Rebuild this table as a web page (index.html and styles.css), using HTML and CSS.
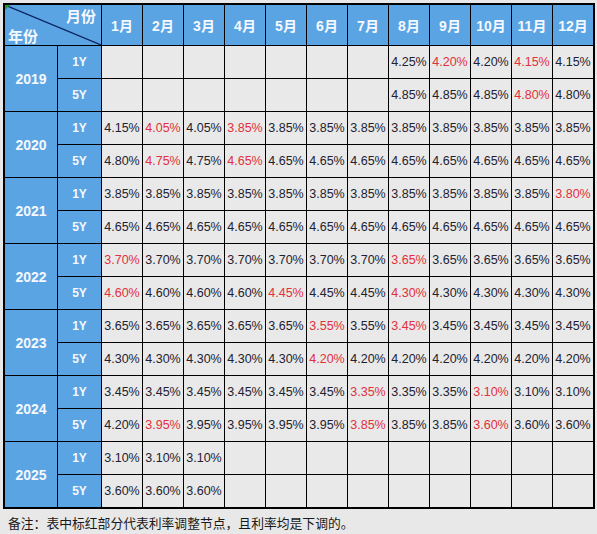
FILE: index.html
```html
<!DOCTYPE html>
<html lang="zh">
<head>
<meta charset="utf-8">
<title>LPR</title>
<link rel="stylesheet" href="styles.css">
</head>
<body>
<div class="page">
<div class="sheet">
  <div class="corner">
    <svg class="diag" viewBox="0 0 96 40" preserveAspectRatio="none"><line x1="0" y1="0" x2="96" y2="40" stroke="#0b2360" stroke-width="1.2"/></svg>
    <span class="flag"></span>
    <span class="c-m">月份</span>
    <span class="c-y">年份</span>
  </div>
  <div class="mh">1月</div><div class="mh">2月</div><div class="mh">3月</div><div class="mh">4月</div><div class="mh">5月</div><div class="mh">6月</div><div class="mh">7月</div><div class="mh">8月</div><div class="mh">9月</div><div class="mh">10月</div><div class="mh">11月</div><div class="mh">12月</div>

  <div class="yr">2019</div>
  <div class="tm">1Y</div>
  <div class="c"></div><div class="c"></div><div class="c"></div><div class="c"></div><div class="c"></div><div class="c"></div><div class="c"></div><div class="c">4.25%</div><div class="c dn">4.20%</div><div class="c">4.20%</div><div class="c dn">4.15%</div><div class="c">4.15%</div>
  <div class="tm">5Y</div>
  <div class="c"></div><div class="c"></div><div class="c"></div><div class="c"></div><div class="c"></div><div class="c"></div><div class="c"></div><div class="c">4.85%</div><div class="c">4.85%</div><div class="c">4.85%</div><div class="c dn">4.80%</div><div class="c">4.80%</div>

  <div class="yr">2020</div>
  <div class="tm">1Y</div>
  <div class="c">4.15%</div><div class="c dn">4.05%</div><div class="c">4.05%</div><div class="c dn">3.85%</div><div class="c">3.85%</div><div class="c">3.85%</div><div class="c">3.85%</div><div class="c">3.85%</div><div class="c">3.85%</div><div class="c">3.85%</div><div class="c">3.85%</div><div class="c">3.85%</div>
  <div class="tm">5Y</div>
  <div class="c">4.80%</div><div class="c dn">4.75%</div><div class="c">4.75%</div><div class="c dn">4.65%</div><div class="c">4.65%</div><div class="c">4.65%</div><div class="c">4.65%</div><div class="c">4.65%</div><div class="c">4.65%</div><div class="c">4.65%</div><div class="c">4.65%</div><div class="c">4.65%</div>

  <div class="yr">2021</div>
  <div class="tm">1Y</div>
  <div class="c">3.85%</div><div class="c">3.85%</div><div class="c">3.85%</div><div class="c">3.85%</div><div class="c">3.85%</div><div class="c">3.85%</div><div class="c">3.85%</div><div class="c">3.85%</div><div class="c">3.85%</div><div class="c">3.85%</div><div class="c">3.85%</div><div class="c dn">3.80%</div>
  <div class="tm">5Y</div>
  <div class="c">4.65%</div><div class="c">4.65%</div><div class="c">4.65%</div><div class="c">4.65%</div><div class="c">4.65%</div><div class="c">4.65%</div><div class="c">4.65%</div><div class="c">4.65%</div><div class="c">4.65%</div><div class="c">4.65%</div><div class="c">4.65%</div><div class="c">4.65%</div>

  <div class="yr">2022</div>
  <div class="tm">1Y</div>
  <div class="c dn">3.70%</div><div class="c">3.70%</div><div class="c">3.70%</div><div class="c">3.70%</div><div class="c">3.70%</div><div class="c">3.70%</div><div class="c">3.70%</div><div class="c dn">3.65%</div><div class="c">3.65%</div><div class="c">3.65%</div><div class="c">3.65%</div><div class="c">3.65%</div>
  <div class="tm">5Y</div>
  <div class="c dn">4.60%</div><div class="c">4.60%</div><div class="c">4.60%</div><div class="c">4.60%</div><div class="c dn">4.45%</div><div class="c">4.45%</div><div class="c">4.45%</div><div class="c dn">4.30%</div><div class="c">4.30%</div><div class="c">4.30%</div><div class="c">4.30%</div><div class="c">4.30%</div>

  <div class="yr">2023</div>
  <div class="tm">1Y</div>
  <div class="c">3.65%</div><div class="c">3.65%</div><div class="c">3.65%</div><div class="c">3.65%</div><div class="c">3.65%</div><div class="c dn">3.55%</div><div class="c">3.55%</div><div class="c dn">3.45%</div><div class="c">3.45%</div><div class="c">3.45%</div><div class="c">3.45%</div><div class="c">3.45%</div>
  <div class="tm">5Y</div>
  <div class="c">4.30%</div><div class="c">4.30%</div><div class="c">4.30%</div><div class="c">4.30%</div><div class="c">4.30%</div><div class="c dn">4.20%</div><div class="c">4.20%</div><div class="c">4.20%</div><div class="c">4.20%</div><div class="c">4.20%</div><div class="c">4.20%</div><div class="c">4.20%</div>

  <div class="yr">2024</div>
  <div class="tm">1Y</div>
  <div class="c">3.45%</div><div class="c">3.45%</div><div class="c">3.45%</div><div class="c">3.45%</div><div class="c">3.45%</div><div class="c">3.45%</div><div class="c dn">3.35%</div><div class="c">3.35%</div><div class="c">3.35%</div><div class="c dn">3.10%</div><div class="c">3.10%</div><div class="c">3.10%</div>
  <div class="tm">5Y</div>
  <div class="c">4.20%</div><div class="c dn">3.95%</div><div class="c">3.95%</div><div class="c">3.95%</div><div class="c">3.95%</div><div class="c">3.95%</div><div class="c dn">3.85%</div><div class="c">3.85%</div><div class="c">3.85%</div><div class="c dn">3.60%</div><div class="c">3.60%</div><div class="c">3.60%</div>

  <div class="yr">2025</div>
  <div class="tm">1Y</div>
  <div class="c">3.10%</div><div class="c">3.10%</div><div class="c">3.10%</div><div class="c"></div><div class="c"></div><div class="c"></div><div class="c"></div><div class="c"></div><div class="c"></div><div class="c"></div><div class="c"></div><div class="c"></div>
  <div class="tm">5Y</div>
  <div class="c">3.60%</div><div class="c">3.60%</div><div class="c">3.60%</div><div class="c"></div><div class="c"></div><div class="c"></div><div class="c"></div><div class="c"></div><div class="c"></div><div class="c"></div><div class="c"></div><div class="c"></div>
</div>
<p class="note">备注：表中标红部分代表利率调整节点，且利率均是下调的。</p>
</div>
</body>
</html>
```

FILE: styles.css
```css
html, body {
  margin: 0;
  padding: 0;
  background: #e8e8e8;
}

.page {
  padding: 3px 0 0 3px;
  font-family: "Liberation Sans", "Noto Sans CJK SC", sans-serif;
}

.sheet {
  display: grid;
  grid-template-columns: 52px 43px repeat(12, 40px);
  grid-template-rows: 40px repeat(14, 32px);
  gap: 1px;
  width: max-content;
  background: #000;
  border: 2px solid #000;
}

.corner {
  grid-column: span 2;
  position: relative;
  background: #5ba4e3;
  color: #f4f8ff;
  font-family: "Noto Sans CJK SC", sans-serif;
  font-weight: bold;
  font-size: 15px;
  line-height: 16px;
  display: flex;
  flex-direction: column;
  justify-content: space-between;
  padding: 3px 3px 1px 3px;
  box-sizing: border-box;
}

.diag {
  position: absolute;
  left: 0;
  top: 0;
  width: 100%;
  height: 100%;
}

.flag {
  position: absolute;
  left: 0;
  top: 0;
  width: 0;
  height: 0;
  border-top: 5px solid #1f9a2a;
  border-right: 5px solid transparent;
}

.c-m {
  align-self: flex-end;
  padding-right: 2px;
}

.c-y {
  align-self: flex-start;
}

.mh {
  background: #5ba4e3;
  color: #f4f8ff;
  font-weight: bold;
  font-size: 14px;
  font-family: "Liberation Sans", "Noto Sans CJK SC", sans-serif;
  display: flex;
  align-items: center;
  justify-content: center;
}

.yr {
  grid-row: span 2;
  background: #5ba4e3;
  color: #f4f8ff;
  font-weight: bold;
  font-size: 14px;
  display: flex;
  align-items: center;
  justify-content: center;
}

.tm {
  background: #5ba4e3;
  color: #f4f8ff;
  font-weight: bold;
  font-size: 12px;
  display: flex;
  align-items: center;
  justify-content: center;
}

.c {
  background: #e9e9e9;
  color: #1e2230;
  font-size: 12.5px;
  display: flex;
  align-items: center;
  justify-content: center;
  white-space: nowrap;
  overflow: hidden;
}

.dn {
  color: #e2303c;
}

.note {
  margin: 0;
  padding: 5px 0 0 5px;
  font-family: "Noto Sans CJK SC", sans-serif;
  font-size: 12.8px;
  line-height: 18px;
  color: #1a1a1a;
}
```
